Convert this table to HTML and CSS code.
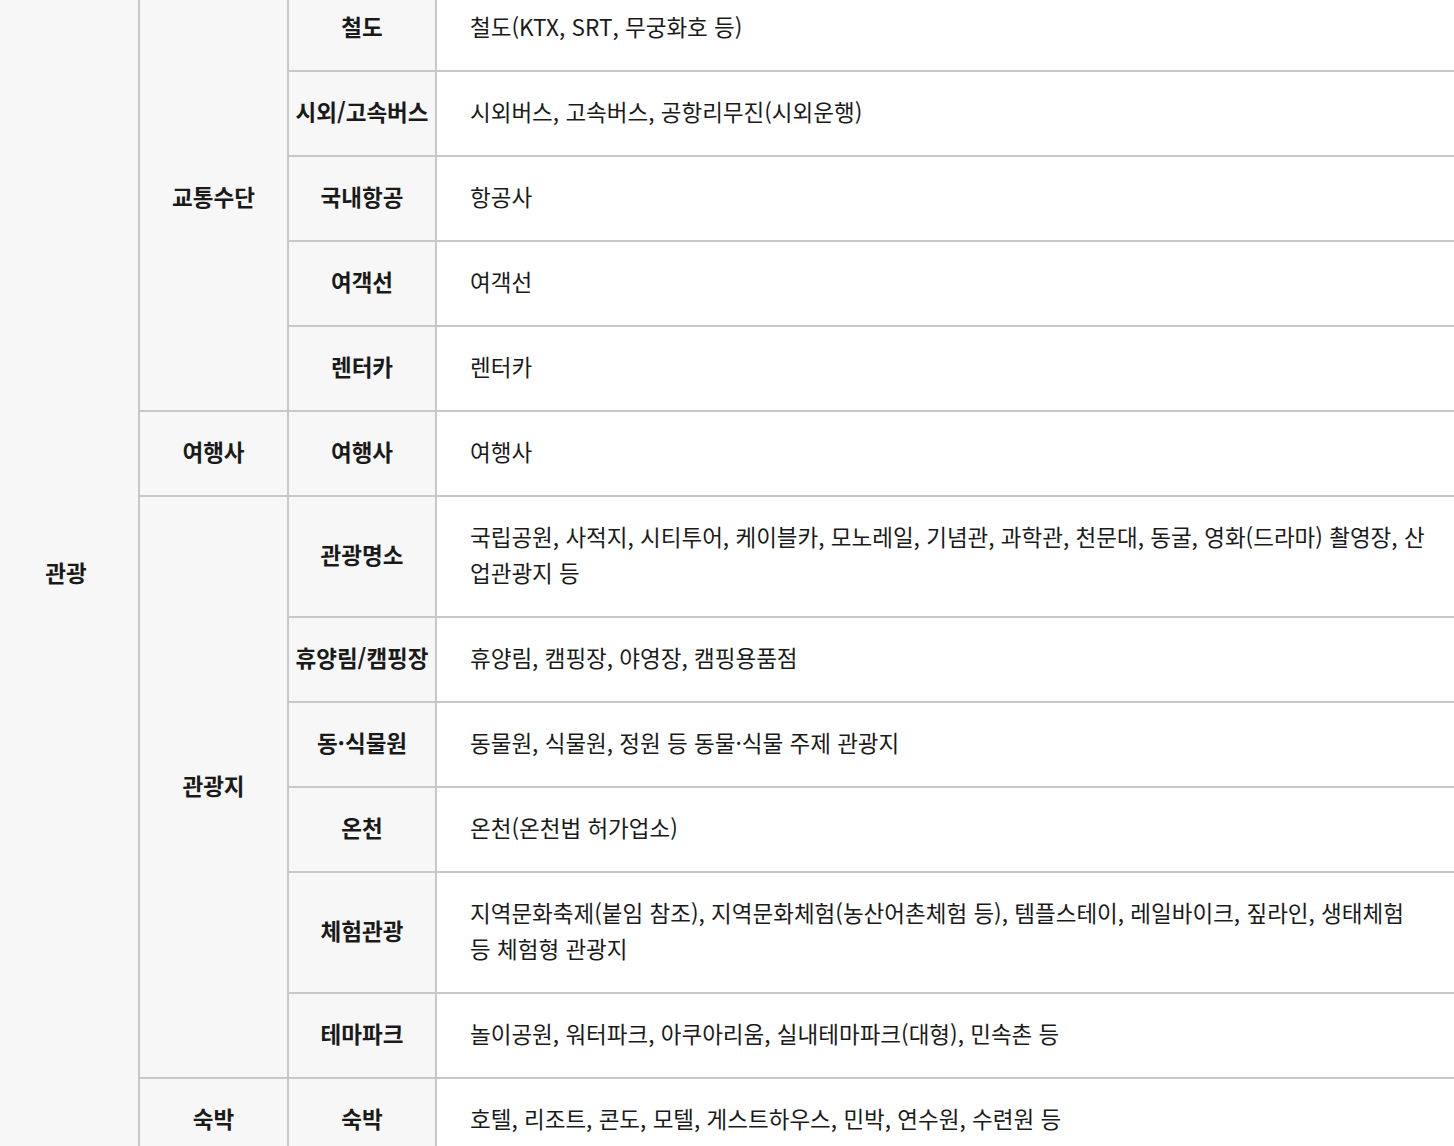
FILE: index.html
```html
<!DOCTYPE html>
<html lang="ko">
<head>
  <meta charset="UTF-8">
  <meta name="viewport" content="width=device-width, initial-scale=1.0">
  <title>관광 업종 분류</title>
  <link rel="stylesheet" href="styles.css">
</head>
<body>
  <table class="biz-table">
    <colgroup>
      <col class="col-a">
      <col class="col-b">
      <col class="col-c">
      <col>
    </colgroup>
    <tbody>
      <tr>
        <th class="big" rowspan="14">관광</th>
        <th class="mid" rowspan="5">교통수단</th>
        <th>철도</th>
        <td>철도(KTX, SRT, 무궁화호 등)</td>
      </tr>
      <tr>
        <th>시외/고속버스</th>
        <td>시외버스, 고속버스, 공항리무진(시외운행)</td>
      </tr>
      <tr>
        <th>국내항공</th>
        <td>항공사</td>
      </tr>
      <tr>
        <th>여객선</th>
        <td>여객선</td>
      </tr>
      <tr>
        <th>렌터카</th>
        <td>렌터카</td>
      </tr>
      <tr>
        <th class="mid">여행사</th>
        <th>여행사</th>
        <td>여행사</td>
      </tr>
      <tr>
        <th class="mid" rowspan="6">관광지</th>
        <th>관광명소</th>
        <td>국립공원, 사적지, 시티투어, 케이블카, 모노레일, 기념관, 과학관, 천문대, 동굴, 영화(드라마) 촬영장, 산업관광지 등</td>
      </tr>
      <tr>
        <th>휴양림/캠핑장</th>
        <td>휴양림, 캠핑장, 야영장, 캠핑용품점</td>
      </tr>
      <tr>
        <th>동·식물원</th>
        <td>동물원, 식물원, 정원 등 동물·식물 주제 관광지</td>
      </tr>
      <tr>
        <th>온천</th>
        <td>온천(온천법 허가업소)</td>
      </tr>
      <tr>
        <th>체험관광</th>
        <td>지역문화축제(붙임 참조), 지역문화체험(농산어촌체험 등), 템플스테이, 레일바이크, 짚라인, 생태체험 등 체험형 관광지</td>
      </tr>
      <tr>
        <th>테마파크</th>
        <td>놀이공원, 워터파크, 아쿠아리움, 실내테마파크(대형), 민속촌 등</td>
      </tr>
      <tr>
        <th class="mid">숙박</th>
        <th>숙박</th>
        <td>호텔, 리조트, 콘도, 모텔, 게스트하우스, 민박, 연수원, 수련원 등</td>
      </tr>
    </tbody>
  </table>
</body>
</html>
```

FILE: styles.css
```css
body {
  margin: 0;
  background-color: #ffffff;
  font-family: "Noto Sans CJK KR", "Noto Sans", sans-serif;
  color: #1a1a1a;
  overflow: hidden;
}
.biz-table {
  border-collapse: collapse;
  table-layout: fixed;
  width: 1471px;
  margin: -15px 0 0 -8px;
  font-size: 22.5px;
  line-height: 36px;
}
.col-a {
  width: 146px;
}
.col-b {
  width: 149px;
}
.col-c {
  width: 148px;
}
.biz-table th,
.biz-table td {
  border: 2px solid #c8c8c8;
  padding: 21px 35px 26px 33px;
}
.biz-table th {
  background-color: #f7f7f7;
  font-weight: bold;
  text-align: center;
  padding-left: 2px;
  padding-right: 2px;
  white-space: nowrap;
}
.biz-table th.big {
  border-right: 1px solid #d4d4d4;
}
.biz-table td {
  text-align: left;
  word-break: normal;
  line-break: anywhere;
}
```
